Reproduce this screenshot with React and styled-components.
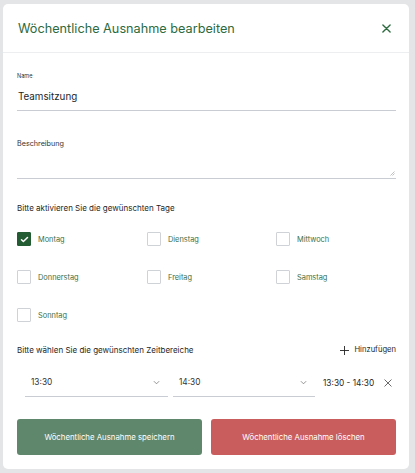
import React from 'react'
import styled, { createGlobalStyle } from 'styled-components'

const Global = createGlobalStyle`
  html, body {
    margin: 0;
    padding: 0;
    background: #e3e5e6;
    font-family: Inter, "Noto Sans", sans-serif;
  }
`;

const Page = styled.div`
  width: 415px;
  height: 473px;
  padding: 4px 0 0 3px;
  box-sizing: border-box;
  background: #e3e5e6;
`;

const Modal = styled.div`
  width: 406px;
  height: 465px;
  background: #fff;
  border-radius: 5px;
  box-sizing: border-box;
  display: flex;
  flex-direction: column;
`;

const Header = styled.div`
  height: 49px;
  display: flex;
  align-items: center;
  justify-content: space-between;
  padding: 1px 18px 0 15px;
  border-bottom: 1px solid #eceeef;
  box-sizing: border-box;
`;

const Title = styled.h2`
  margin: 0;
  font-size: 12.7px;
  font-weight: 400;
  color: #2d6a3e;
`;

const CloseButton = styled.button`
  border: none;
  background: none;
  padding: 0;
  display: flex;
  color: ${p => p.$muted ? '#555' : '#2d6a3e'};
`;

const Body = styled.div`
  padding: 0 13px 0 14px;
  display: flex;
  flex-direction: column;
`;

const Field = styled.div`
  display: flex;
  flex-direction: column;
  border-bottom: 1px solid #c9ccd3;
  margin-top: ${p => p.$top}px;
`;

const SmallLabel = styled.label`
  font-size: ${p => p.$size}px;
  line-height: ${p => p.$line}px;
  color: #333;
`;

const Value = styled.div`
  font-size: 9.8px;
  line-height: 12px;
  color: #1f1f1f;
  padding: 11px 0 7px 1px;
`;

const TextArea = styled.div`
  height: 29px;
  position: relative;
`;

const Grip = styled.svg`
  position: absolute;
  right: 1px;
  bottom: 2px;
`;

const SectionTitle = styled.div`
  font-size: 8px;
  line-height: 10px;
  color: #1f1f1f;
  margin-top: ${p => p.$top}px;
`;

const DayGrid = styled.div`
  display: grid;
  grid-template-columns: 130px 129px 1fr;
  row-gap: 24px;
  margin-top: 19px;
`;

const Day = styled.label`
  display: flex;
  align-items: center;
  gap: 7px;
  font-size: 7.4px;
  color: #3b7049;
`;

const Box = styled.span`
  width: 14px;
  height: 14px;
  box-sizing: border-box;
  border: 1px solid ${p => p.$checked ? '#235c33' : '#cfd2d6'};
  background: ${p => p.$checked ? '#235c33' : '#fff'};
  border-radius: 1px;
  display: flex;
  align-items: center;
  justify-content: center;
`;

const ZeitHead = styled.div`
  display: flex;
  align-items: center;
  justify-content: space-between;
  margin-top: 23px;
`;

const AddButton = styled.button`
  border: none;
  background: none;
  padding: 0;
  display: flex;
  align-items: center;
  gap: 5px;
  font-family: inherit;
  font-size: 7.6px;
  line-height: 10px;
  color: #1f1f1f;
`;

const TimeRow = styled.div`
  display: flex;
  align-items: center;
  margin-top: 14px;
  padding-left: 8px;
`;

const Select = styled.div`
  width: ${p => p.$width}px;
  margin-right: ${p => p.$gap}px;
  border-bottom: 1px solid #c9ccd3;
  display: flex;
  align-items: center;
  justify-content: space-between;
  padding: 8px 8px 9px 6px;
  line-height: 10px;
  box-sizing: border-box;
  font-size: 8.3px;
  color: #333;
`;

const Range = styled.span`
  font-size: 8.3px;
  color: #1f1f1f;
  white-space: nowrap;
  margin: 0 10px 0 8px;
`;

const Buttons = styled.div`
  display: grid;
  grid-template-columns: 185px 185px;
  justify-content: space-between;
  margin-top: 22px;
`;

const ActionButton = styled.button`
  height: 36px;
  border: none;
  border-radius: 3px;
  background: ${p => p.$danger ? '#c95d5d' : '#5f876c'};
  color: #fff;
  font-family: inherit;
  font-size: 7.8px;
`;

const Check = () => (
  <svg width="9" height="9" viewBox="0 0 24 24" fill="none" stroke="#fff" strokeWidth="4" strokeLinecap="round" strokeLinejoin="round">
    <path d="M4 12.5l5 5L20 6.5" />
  </svg>
);

const Cross = ({ size = 9, width = 1.5 }) => (
  <svg width={size} height={size} viewBox="0 0 10 10" fill="none" stroke="currentColor" strokeWidth={width} strokeLinecap="round">
    <path d="M1 1l8 8M9 1L1 9" />
  </svg>
);

const Chevron = () => (
  <svg width="7" height="5" viewBox="0 0 8 5" fill="none" stroke="#777" strokeWidth="0.9">
    <path d="M1 1l3 3 3-3" />
  </svg>
);

const days = [
  ['Montag', true], ['Dienstag'], ['Mittwoch'],
  ['Donnerstag'], ['Freitag'], ['Samstag'],
  ['Sonntag'],
];

export default function App() {
  return (
    <Page>
      <Global />
      <Modal>
        <Header>
          <Title>Wöchentliche Ausnahme bearbeiten</Title>
          <CloseButton><Cross /></CloseButton>
        </Header>
        <Body>
          <Field $top={19}>
            <SmallLabel $size={5.6} $line={8}>Name</SmallLabel>
            <Value>Teamsitzung</Value>
          </Field>
          <Field $top={28}>
            <SmallLabel $size={7.2} $line={10}>Beschreibung</SmallLabel>
            <TextArea>
              <Grip width="5" height="5" viewBox="0 0 5 5" stroke="#999" strokeWidth="0.6">
                <path d="M0.5 4.5L4.5 0.5M2.5 4.5L4.5 2.5" />
              </Grip>
            </TextArea>
          </Field>
          <SectionTitle $top={24}>Bitte aktivieren Sie die gewünschten Tage</SectionTitle>
          <DayGrid>
            {days.map(([name, checked]) => (
              <Day key={name}>
                <Box $checked={checked}>{checked && <Check />}</Box>
                {name}
              </Day>
            ))}
          </DayGrid>
          <ZeitHead>
            <SectionTitle $top={0}>Bitte wählen Sie die gewünschten Zeitbereiche</SectionTitle>
            <AddButton>
              <svg width="9" height="9" viewBox="0 0 10 10" stroke="#222" strokeWidth="1">
                <path d="M5 0v10M0 5h10" />
              </svg>
              Hinzufügen
            </AddButton>
          </ZeitHead>
          <TimeRow>
            <Select $width={143} $gap={5}>13:30<Chevron /></Select>
            <Select $width={142} $gap={0}>14:30<Chevron /></Select>
            <Range>13:30 - 14:30</Range>
            <CloseButton $muted><Cross size={8} width={1.1} /></CloseButton>
          </TimeRow>
          <Buttons>
            <ActionButton>Wöchentliche Ausnahme speichern</ActionButton>
            <ActionButton $danger>Wöchentliche Ausnahme löschen</ActionButton>
          </Buttons>
        </Body>
      </Modal>
    </Page>
  )
}
